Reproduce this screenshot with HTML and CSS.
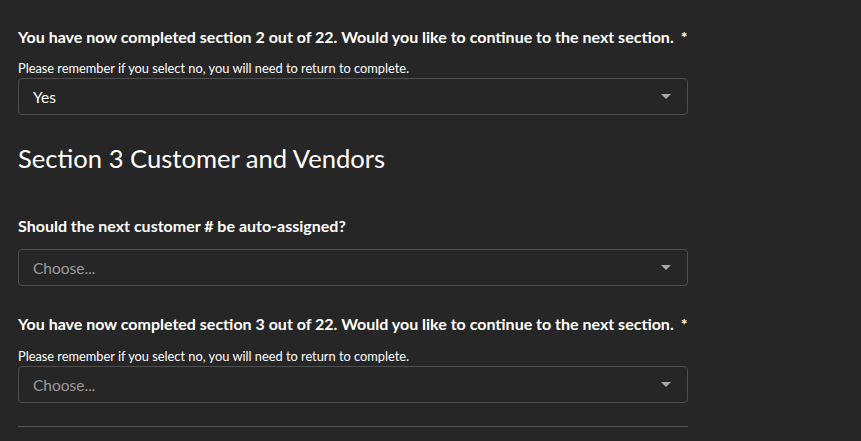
FILE: index.html
```html
<!DOCTYPE html>
<html>
<head>
<meta charset="utf-8">
<link rel="stylesheet" href="styles.css">
</head>
<body>
<div class="form">
  <div class="field first">
    <label class="label">You have now completed section 2 out of 22. Would you like to continue to the next section.<span class="req">*</span></label>
    <div class="help">Please remember if you select no, you will need to return to complete.</div>
    <div class="select"><span class="value">Yes</span><span class="arrow"></span></div>
  </div>
  <h2 class="section-title">Section 3 Customer and Vendors</h2>
  <div class="field">
    <label class="label">Should the next customer # be auto-assigned?</label>
    <div class="select spaced"><span class="value placeholder">Choose...</span><span class="arrow"></span></div>
  </div>
  <div class="field">
    <label class="label">You have now completed section 3 out of 22. Would you like to continue to the next section.<span class="req">*</span></label>
    <div class="help">Please remember if you select no, you will need to return to complete.</div>
    <div class="select"><span class="value placeholder">Choose...</span><span class="arrow"></span></div>
  </div>
  <hr class="divider">
</div>
</body>
</html>
```
FILE: styles.css
```css
html, body {
  margin: 0;
  padding: 0;
  background: #262626;
  color: #ffffff;
  font-family: "Lato", "Liberation Sans", sans-serif;
}
.form {
  width: 670px;
  padding: 28px 0 0 18px;
}
.field {
  display: flex;
  flex-direction: column;
}
.label {
  font-weight: 700;
  font-size: 16px;
  line-height: 18px;
  height: 18px;
}
.req {
  margin-left: 7px;
}
.help {
  font-size: 12.8px;
  line-height: 14px;
  margin-top: 15px;
}
.select {
  margin-top: 3px;
  height: 35px;
  border: 1px solid #4d4d4d;
  border-radius: 4px;
  display: flex;
  align-items: center;
  justify-content: space-between;
  padding: 0 16px 0 14px;
}
.select.spaced {
  margin-top: 14px;
}
.value {
  font-size: 15.5px;
}
.placeholder {
  color: #9a9a9a;
}
.arrow {
  width: 0;
  height: 0;
  border-left: 5px solid transparent;
  border-right: 5px solid transparent;
  border-top: 5px solid #a8a8a8;
}
.section-title {
  font-weight: 400;
  font-size: 25.6px;
  line-height: 30px;
  margin: 28px 0 0 0;
  height: 74px;
}
.field + .field {
  margin-top: 29px;
}
.field + .field .help {
  margin-top: 16px;
}
.divider {
  margin: 23px 0 0 0;
  border: 0;
  border-top: 1px solid #555555;
  height: 0;
}
```
